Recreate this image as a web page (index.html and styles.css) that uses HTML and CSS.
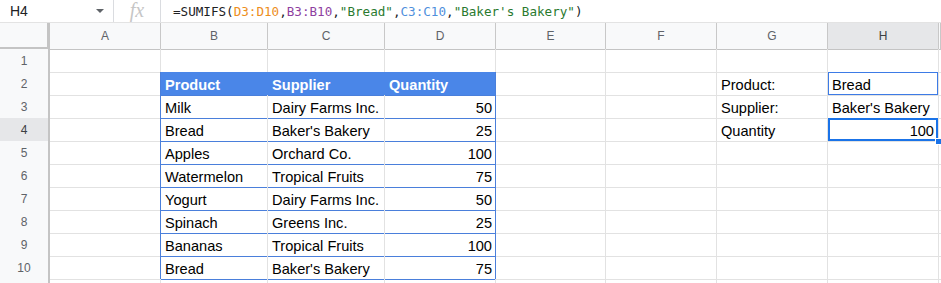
FILE: index.html
```html
<!DOCTYPE html>
<html lang="en">
<head>
  <meta charset="utf-8">
  <title>SUMIFS</title>
  <link rel="stylesheet" href="styles.css">
</head>
<body>
  <div class="formula-bar">
    <div class="name-box"><span>H4</span><span class="caret"></span></div>
    <div class="fx">fx</div>
    <div class="formula">=SUMIFS(<span class="ref-d">D3:D10</span>,<span class="ref-b">B3:B10</span>,<span class="str">"Bread"</span>,<span class="ref-c">C3:C10</span>,<span class="str">"Baker's Bakery"</span>)</div>
  </div>

  <div class="sheet">
    <div class="row col-heads">
      <div class="corner"></div>
      <div class="ch">A</div><div class="ch">B</div><div class="ch">C</div><div class="ch">D</div>
      <div class="ch">E</div><div class="ch">F</div><div class="ch">G</div><div class="ch active">H</div>
      <div class="ch"></div>
    </div>

    <div class="row">
      <div class="rh">1</div>
      <div class="c"></div><div class="c"></div><div class="c"></div><div class="c"></div>
      <div class="c"></div><div class="c"></div><div class="c"></div><div class="c"></div><div class="c"></div>
    </div>

    <div class="row">
      <div class="rh">2</div>
      <div class="c edge"></div>
      <div class="c th">Product</div><div class="c th">Supplier</div><div class="c th last">Quantity</div>
      <div class="c"></div><div class="c"></div>
      <div class="c">Product:</div><div class="c outlined">Bread</div><div class="c"></div>
    </div>

    <div class="row">
      <div class="rh">3</div>
      <div class="c edge"></div>
      <div class="c td">Milk</div><div class="c td">Dairy Farms Inc.</div><div class="c td num last">50</div>
      <div class="c"></div><div class="c"></div>
      <div class="c">Supplier:</div><div class="c">Baker's Bakery</div><div class="c"></div>
    </div>

    <div class="row">
      <div class="rh active">4</div>
      <div class="c edge"></div>
      <div class="c td">Bread</div><div class="c td">Baker's Bakery</div><div class="c td num last">25</div>
      <div class="c"></div><div class="c"></div>
      <div class="c">Quantity</div><div class="c num selected">100<span class="handle"></span></div><div class="c"></div>
    </div>

    <div class="row">
      <div class="rh">5</div>
      <div class="c edge"></div>
      <div class="c td">Apples</div><div class="c td">Orchard Co.</div><div class="c td num last">100</div>
      <div class="c"></div><div class="c"></div><div class="c"></div><div class="c"></div><div class="c"></div>
    </div>

    <div class="row">
      <div class="rh">6</div>
      <div class="c edge"></div>
      <div class="c td">Watermelon</div><div class="c td">Tropical Fruits</div><div class="c td num last">75</div>
      <div class="c"></div><div class="c"></div><div class="c"></div><div class="c"></div><div class="c"></div>
    </div>

    <div class="row">
      <div class="rh">7</div>
      <div class="c edge"></div>
      <div class="c td">Yogurt</div><div class="c td">Dairy Farms Inc.</div><div class="c td num last">50</div>
      <div class="c"></div><div class="c"></div><div class="c"></div><div class="c"></div><div class="c"></div>
    </div>

    <div class="row">
      <div class="rh">8</div>
      <div class="c edge"></div>
      <div class="c td">Spinach</div><div class="c td">Greens Inc.</div><div class="c td num last">25</div>
      <div class="c"></div><div class="c"></div><div class="c"></div><div class="c"></div><div class="c"></div>
    </div>

    <div class="row">
      <div class="rh">9</div>
      <div class="c edge"></div>
      <div class="c td">Bananas</div><div class="c td">Tropical Fruits</div><div class="c td num last">100</div>
      <div class="c"></div><div class="c"></div><div class="c"></div><div class="c"></div><div class="c"></div>
    </div>

    <div class="row">
      <div class="rh">10</div>
      <div class="c edge"></div>
      <div class="c td">Bread</div><div class="c td">Baker's Bakery</div><div class="c td num last">75</div>
      <div class="c"></div><div class="c"></div><div class="c"></div><div class="c"></div><div class="c"></div>
    </div>

    <div class="row">
      <div class="rh"></div>
      <div class="c"></div><div class="c"></div><div class="c"></div><div class="c"></div>
      <div class="c"></div><div class="c"></div><div class="c"></div><div class="c"></div><div class="c"></div>
    </div>
  </div>
</body>
</html>
```

FILE: styles.css
```css
* {
  box-sizing: border-box;
  margin: 0;
  padding: 0;
}

body {
  font-family: 'Liberation Sans', Arial, sans-serif;
  background: #fff;
  color: #000;
  overflow: hidden;
}

/* Formula bar */
.formula-bar {
  display: flex;
  align-items: center;
  height: 23px;
  border-bottom: 1px solid #e3e3e3;
}

.name-box {
  width: 113px;
  display: flex;
  align-items: center;
  justify-content: space-between;
  padding: 0 9px 0 10px;
  font-size: 14px;
  color: #202124;
}

.caret {
  border-left: 4px solid transparent;
  border-right: 4px solid transparent;
  border-top: 4px solid #5f6368;
}

.fx {
  width: 48px;
  height: 22px;
  border-left: 1px solid #dadce0;
  border-right: 1px solid #dadce0;
  text-align: center;
  font-family: 'Liberation Serif', serif;
  font-style: italic;
  font-size: 20px;
  line-height: 20px;
  color: #c6c6c6;
}

.formula {
  padding-left: 12px;
  font-family: 'DejaVu Sans Mono', monospace;
  font-size: 12.6px;
  color: #202124;
  white-space: nowrap;
}

.ref-d { color: #ed8e1c; }
.ref-b { color: #8e3fa0; }
.ref-c { color: #4f8fdc; }
.str { color: #2a7a2f; }

/* Grid */
.row {
  display: grid;
  grid-template-columns: 50px 111px 107px 117px 111px 110px 111px 111px 111px 1fr;
  height: 23px;
}

.col-heads {
  height: 26px;
}

.corner {
  background: #f8f9fa;
  border-right: 3px solid #c4c4c4;
  border-bottom: 3px solid #c4c4c4;
}

.ch {
  background: #f8f9fa;
  border-right: 1px solid #c8c8c8;
  border-bottom: 1px solid #c4c4c4;
  font-size: 12px;
  line-height: 26px;
  text-align: center;
  color: #5f6368;
}

.ch.active,
.rh.active {
  background: #e6e7e9;
  color: #3c4043;
}

.rh {
  background: #f8f9fa;
  border-right: 2px solid #c4c4c4;
  border-bottom: 1px solid #d6d6d6;
  padding-top: 1px;
  font-size: 12px;
  line-height: 22px;
  text-align: center;
  color: #5f6368;
}

.c {
  position: relative;
  border-right: 1px solid #e2e2e2;
  border-bottom: 1px solid #e2e2e2;
  padding: 3px 4px 0;
  font-size: 14.6px;
  line-height: 20px;
  white-space: nowrap;
}

.num {
  text-align: right;
  padding-right: 3px;
}

/* Data table B2:D10 */
.c.edge {
  border-right-color: #4a7fdb;
}

.c.th {
  background: #4a86e8;
  border-right-color: #4a86e8;
  border-bottom-color: #4a7fdb;
  color: #fff;
  font-weight: bold;
}

.c.td {
  border-bottom-color: #4a7fdb;
}

.c.last {
  border-right-color: #4a7fdb;
}

/* Lookup cells */
.c.outlined {
  box-shadow: inset 0 0 0 1px #3d7be6;
}

.c.selected {
  box-shadow: inset 0 0 0 2px #1a73e8;
  padding-right: 4px;
}

.handle {
  position: absolute;
  z-index: 2;
  right: -4px;
  bottom: -4px;
  width: 7px;
  height: 7px;
  background: #1a73e8;
  border: 1px solid #fff;
}
```
